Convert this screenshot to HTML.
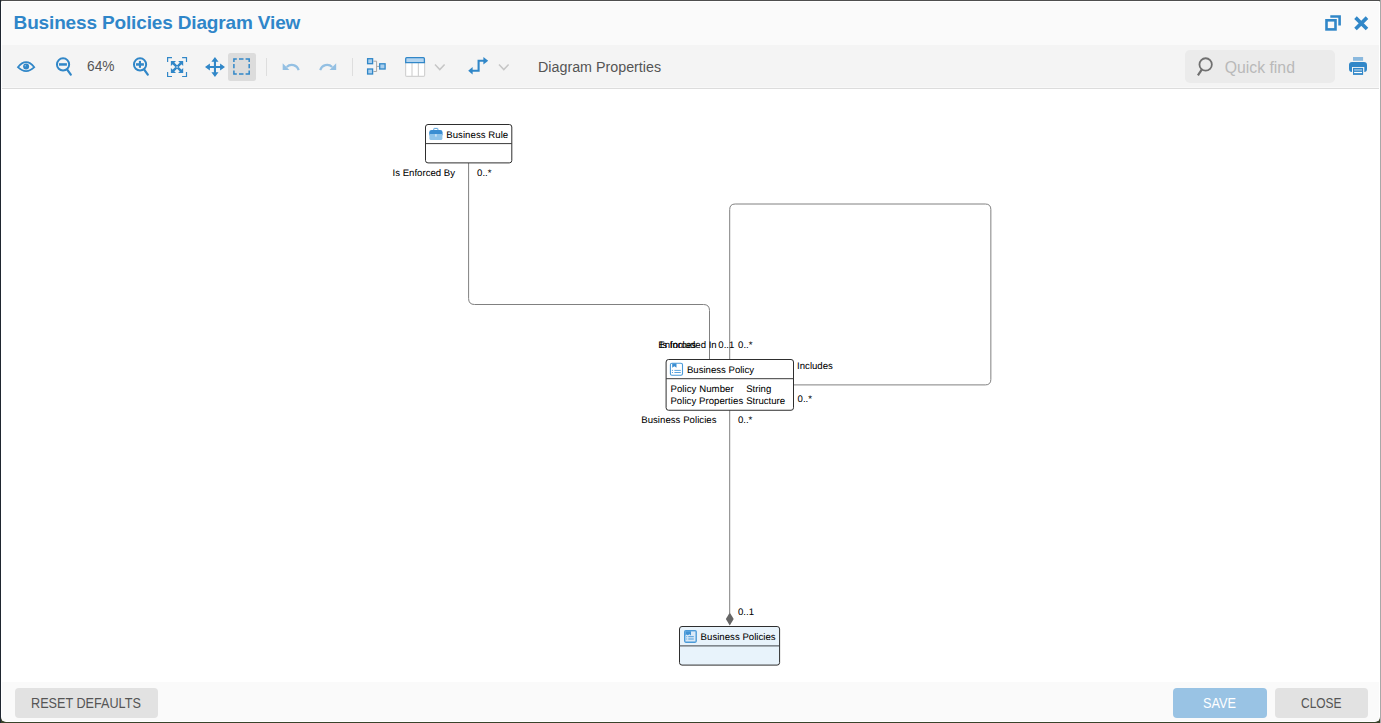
<!DOCTYPE html>
<html lang="en">
<head>
<meta charset="utf-8">
<title>Business Policies Diagram View</title>
<style>
html,body{margin:0;padding:0;}
body{width:1381px;height:723px;overflow:hidden;position:relative;background:#39432a;font-family:"Liberation Sans",sans-serif;}
#bgtop{position:absolute;left:0;top:0;width:1381px;height:1px;background:#4e4e4e;}
#bgleft{position:absolute;left:0;top:0;width:1px;height:723px;background:#1f2630;}
#bgright{position:absolute;left:1380px;top:0;width:1px;height:723px;background:#a8a8a8;}
#dlg{position:absolute;left:1px;top:1px;width:1379px;height:721px;background:#fff;border-radius:1px 1px 5px 5px;overflow:hidden;}
#titlebar{position:absolute;left:1px;top:1px;width:1377px;height:43px;background:#fafafa;}
#title{position:absolute;left:12.6px;top:10.6px;font-weight:bold;font-size:19px;letter-spacing:-0.15px;line-height:22px;color:#2f86c9;white-space:nowrap;}
#toolbar{position:absolute;left:1px;top:44px;width:1377px;height:42px;background:#f4f4f4;}
#tbline1{position:absolute;left:1px;top:86px;width:1377px;height:1px;background:#f8f8f8;}
#tbline2{position:absolute;left:1px;top:87px;width:1377px;height:1px;background:#dcdcdc;}
#canvas{position:absolute;left:0;top:88px;width:1379px;height:593px;background:#fff;}
#footer{position:absolute;left:1px;top:681px;width:1377px;height:39px;background:#fafafa;}
.ui{position:absolute;white-space:nowrap;transform-origin:0 0;color:#555;}
.btn{position:absolute;border-radius:4px;background:#e2e2e2;}
svg{position:absolute;left:0;top:0;overflow:visible;}
#diagram text{stroke:#000;stroke-width:0.04px;}
</style>
</head>
<body>
<div id="bgtop"></div><div id="bgleft"></div><div id="bgright"></div>
<div id="dlg">
  <div id="titlebar"></div>
  <div id="title">Business Policies Diagram View</div>
  <div id="toolbar"></div>
  <div id="tbline1"></div><div id="tbline2"></div>
  <div id="canvas"></div>
  <div id="footer"></div>

  <div class="ui" id="t64" style="left:86.4px;top:55.3px;font-size:15px;line-height:20px;transform:scaleX(0.915);">64%</div>
  <div class="ui" id="tdp" style="left:537.3px;top:56.3px;font-size:15.3px;line-height:20px;transform:scaleX(0.934);">Diagram Properties</div>
  <div class="btn" style="left:1184px;top:49px;width:150px;height:33px;background:#ebebeb;border-radius:5px;"></div>
  <div class="ui" id="tqf" style="left:1223.7px;top:56.5px;font-size:15.8px;line-height:20px;color:#b9b9b9;">Quick find</div>

  <div class="btn" style="left:227px;top:52px;width:28px;height:28px;background:#dcdcdc;border-radius:2.5px;"></div>
  <div style="position:absolute;left:265px;top:57px;width:1px;height:18px;background:#dedede;"></div>
  <div style="position:absolute;left:351px;top:57px;width:1px;height:18px;background:#dedede;"></div>

  <div class="btn" style="left:14px;top:687px;width:143px;height:30px;"></div>
  <div class="ui" id="trd" style="left:30.3px;top:691.6px;font-size:14.5px;line-height:20px;transform:scaleX(0.872);">RESET DEFAULTS</div>
  <div class="btn" style="left:1172px;top:687px;width:94px;height:30px;background:#99c3e4;"></div>
  <div class="ui" id="tsv" style="left:1201.7px;top:691.6px;font-size:14.5px;line-height:20px;color:#fff;transform:scaleX(0.877);">SAVE</div>
  <div class="btn" style="left:1274px;top:687px;width:93px;height:30px;"></div>
  <div class="ui" id="tcl" style="left:1299.8px;top:691.6px;font-size:14.5px;line-height:20px;transform:scaleX(0.824);">CLOSE</div>

  <svg id="icons" width="1379" height="90" viewBox="1 1 1379 90">
  <!-- eye -->
  <path d="M17.9,67.2 Q21.8,62.1 26.1,62.1 Q30.4,62.1 34.3,67.2 Q30.4,71.1 26.1,71.1 Q21.8,71.1 17.9,67.2 Z" fill="none" stroke="#3187c8" stroke-width="1.7" stroke-linejoin="miter"/>
  <circle cx="26.1" cy="66.5" r="3" fill="#3187c8"/>
  <circle cx="25.3" cy="65.8" r="0.8" fill="#8fbde2"/>
  <!-- zoom out -->
  <circle cx="63.05" cy="64.45" r="6.1" fill="none" stroke="#3187c8" stroke-width="2"/>
  <path d="M67.2,69.6 L70.8,74.7" stroke="#3187c8" stroke-width="2.2" stroke-linecap="round"/>
  <rect x="59" y="63.2" width="7.9" height="2.5" fill="#3187c8"/>
  <!-- zoom in -->
  <circle cx="140.05" cy="64.45" r="6.1" fill="none" stroke="#3187c8" stroke-width="2"/>
  <path d="M144.2,69.6 L147.8,74.7" stroke="#3187c8" stroke-width="2.2" stroke-linecap="round"/>
  <rect x="136" y="63.2" width="7.9" height="2.5" fill="#3187c8"/>
  <rect x="138.9" y="60.9" width="2.1" height="6.9" fill="#3187c8"/>
  <!-- fit -->
  <g fill="none" stroke="#3187c8" stroke-width="1.2">
    <path d="M172,57.6 H167.6 V62"/><path d="M182.1,57.6 H186.5 V62"/>
    <path d="M172,76.5 H167.6 V72.1"/><path d="M182.1,76.5 H186.5 V72.1"/>
  </g>
  <g fill="#3187c8" stroke="none">
    <path d="M170.9,60.9 H176 L170.9,66 Z"/><path d="M183.2,60.9 V66 L178.1,60.9 Z"/>
    <path d="M170.9,73.1 V68 L176,73.1 Z"/><path d="M183.2,73.1 H178.1 L183.2,68 Z"/>
  </g>
  <path d="M172.6,62.6 L181.5,71.4 M181.5,62.6 L172.6,71.4" stroke="#3187c8" stroke-width="2.4"/>
  <rect x="176.4" y="66.3" width="1.4" height="1.4" fill="#d9e8f5"/>
  <!-- move -->
  <path d="M214.95,56.9 L218.5,61.8 H216 V65.9 H220.1 V63.4 L225,66.95 L220.1,70.5 V68 H216 V72.2 H218.5 L214.95,77.1 L211.4,72.2 H213.9 V68 H209.9 V70.5 L205,66.95 L209.9,63.4 V65.9 H213.9 V61.8 H211.4 Z" fill="#3187c8"/>
  <!-- select (dashed rect) -->
  <g fill="none" stroke="#3187c8" stroke-width="1.5">
    <path d="M233.9,62 V58.9 H236.8"/><path d="M239,58.9 H243.5"/><path d="M245.6,58.9 H249.2 V62"/>
    <path d="M233.9,64 V68.2"/><path d="M249.2,64 V68.2"/>
    <path d="M233.9,70.4 V74.1 H236.8"/><path d="M239,74.1 H243.5"/><path d="M245.6,74.1 H249.2 V70.4"/>
  </g>
  <!-- undo -->
  <path d="M282.7,63.2 V69.9 H289.4 Z" fill="#94c0e3"/>
  <path d="M286.7,67 A7.2,7.2 0 0 1 298.7,70.1" fill="none" stroke="#94c0e3" stroke-width="2.1"/>
  <!-- redo -->
  <path d="M336.2,63.2 V69.9 H329.5 Z" fill="#94c0e3"/>
  <path d="M332.2,67 A7.2,7.2 0 0 0 320.2,70.1" fill="none" stroke="#94c0e3" stroke-width="2.1"/>
  <!-- layout -->
  <g fill="none" stroke="#a8a8a8" stroke-width="1">
    <path d="M373.5,61.2 H376.6 V71.5 H373.5"/><path d="M376.6,66.4 H379"/>
  </g>
  <g fill="#a9cfee" stroke="#3187c8" stroke-width="1.3">
    <rect x="367.6" y="58.7" width="5" height="5"/><rect x="367.6" y="69" width="5" height="5"/><rect x="379.7" y="63.8" width="5.4" height="5.2"/>
  </g>
  <!-- table -->
  <rect x="405.6" y="61" width="19" height="15.4" rx="1.2" fill="#fff" stroke="#d2d2d2" stroke-width="1.2"/>
  <path d="M412,62.5 V76 M418.4,62.5 V76" stroke="#d2d2d2" stroke-width="1.2"/>
  <path d="M405.7,62.7 V58.7 Q405.7,57.7 406.7,57.7 H423.4 Q424.4,57.7 424.4,58.7 V62.7 Z" fill="#b4d5f0" stroke="#3187c8" stroke-width="1.3"/>
  <!-- chevrons -->
  <path d="M435,64.6 L439.8,69.6 L444.6,64.6" fill="none" stroke="#c6c6c6" stroke-width="1.5"/>
  <path d="M499,64.6 L503.8,69.6 L508.6,64.6" fill="none" stroke="#c6c6c6" stroke-width="1.5"/>
  <!-- route -->
  <path d="M471.5,70.7 H478.6 V60.8 H484" fill="none" stroke="#3187c8" stroke-width="2.1"/>
  <path d="M468.2,70.7 L472.6,66.9 V74.5 Z" fill="#3187c8"/>
  <path d="M488.2,60.8 L483.4,57 V64.6 Z" fill="#3187c8"/>
  <!-- search -->
  <circle cx="1205.65" cy="64.45" r="6.2" fill="none" stroke="#707070" stroke-width="1.8"/>
  <path d="M1201.9,69.3 L1197.9,75.3" stroke="#707070" stroke-width="2.2"/>
  <!-- print -->
  <rect x="1353" y="57" width="10.1" height="3.8" fill="#8bb9de"/>
  <path d="M1349,65 Q1349,62 1352,62 H1364 Q1367,62 1367,65 V69 Q1367,72 1364.3,72 V67 H1352 V72 Q1349,72 1349,69 Z" fill="#3187c8"/>
  <rect x="1353" y="67.9" width="10.1" height="7" fill="#3187c8"/>
  <rect x="1354.1" y="69.3" width="7.9" height="1.3" fill="#a6cbea"/>
  <rect x="1354.1" y="71.9" width="7.9" height="1.2" fill="#fff"/>
  <!-- restore -->
  <rect x="1326.5" y="20.3" width="9" height="9.1" fill="none" stroke="#3187c8" stroke-width="2.6"/>
  <path d="M1330.3,16.5 H1339.6 V25.6" fill="none" stroke="#3187c8" stroke-width="2.6"/>
  <!-- close -->
  <path d="M1355.5,17.6 L1367,29 M1367,17.6 L1355.5,29" stroke="#3187c8" stroke-width="3.6"/>
</svg>

  <svg id="diagram" width="1379" height="721" viewBox="1 1 1379 721" font-family="Liberation Sans, sans-serif" font-size="9.6" fill="#000" text-rendering="geometricPrecision">
  <g fill="none" stroke="#808080" stroke-width="1">
    <path d="M468.6,163 V298.5 Q468.6,304.5 474.6,304.5 H703.5 Q709.5,304.5 709.5,310.5 V359.5"/>
    <path d="M729.7,359.5 V209.5 Q729.7,204 735.2,204 H985.35 Q990.85,204 990.85,209.5 V379.4 Q990.85,384.9 985.35,384.9 H794"/>
    <path d="M729.7,410 V613"/>
  </g>
  <path d="M729.77,612.5 L733.7,619 L729.77,625.5 L725.85,619 Z" fill="#666"/>
  <!-- Business Rule -->
  <rect x="425.5" y="124.5" width="86.3" height="38.4" rx="2.5" fill="#fff" stroke="#2e2e2e" stroke-width="1"/>
  <path d="M425.5,143.6 H511.8" stroke="#3a3a3a" stroke-width="1"/>
  <g>
    <path d="M433.8,130.2 V128.9 Q433.8,128.4 434.3,128.4 H437.4 Q437.9,128.4 437.9,128.9 V130.2" fill="none" stroke="#5ba3dc" stroke-width="1"/>
    <path d="M429.2,132.4 Q429.2,130 431.6,130 H440.2 Q442.6,130 442.6,132.4 V134.4 Q442.6,135.6 441.2,135.6 H430.6 Q429.2,135.6 429.2,134.4 Z" fill="#3a8ed2"/>
    <path d="M429.4,134 H442.4 V138.4 Q442.4,140 440.8,140 H431 Q429.4,140 429.4,138.4 Z" fill="#8ec4ea"/>
    <rect x="435.1" y="134.2" width="1.6" height="2.4" fill="#cfe4f5"/>
  </g>
  <text x="446.25" y="138" textLength="61.95">Business Rule</text>
  <text x="392.6" y="176">Is Enforced By</text>
  <text x="477.1" y="176">0..*</text>
  <!-- Business Policy -->
  <text x="658.3" y="348">Enforces</text>
  <text x="659.65" y="348">Is Included In</text>
  <text x="718.3" y="348">0..1</text>
  <text x="738.1" y="348">0..*</text>
  <rect x="666.1" y="359.5" width="127.4" height="50.75" rx="2.5" fill="#fff" stroke="#2e2e2e" stroke-width="1"/>
  <path d="M666.1,378.7 H793.5" stroke="#3a3a3a" stroke-width="1"/>
  <g>
    <rect x="670.4" y="363.2" width="12.1" height="12.1" rx="1.6" fill="#fff" stroke="#4a9ad9" stroke-width="1.1"/>
    <path d="M672.2,363.4 H676.5 V367.7 L674.35,366.2 L672.2,367.7 Z" fill="#3a8ed2"/>
    <path d="M674.4,370.4 H680.8 M674.4,372.5 H680.8" stroke="#4a9ad9" stroke-width="0.9"/>
    <path d="M671.9,370.4 H673 M671.9,372.5 H673" stroke="#4a9ad9" stroke-width="0.9"/>
  </g>
  <text x="686.9" y="373">Business Policy</text>
  <text x="670.4" y="392" textLength="63.3">Policy Number</text>
  <text x="746.2" y="392">String</text>
  <text x="670.4" y="404" textLength="72.8">Policy Properties</text>
  <text x="746.2" y="404">Structure</text>
  <text x="797.1" y="369">Includes</text>
  <text x="797.6" y="402">0..*</text>
  <text x="641.2" y="423" textLength="75.3">Business Policies</text>
  <text x="737.9" y="423">0..*</text>
  <!-- Business Policies -->
  <text x="738" y="615">0..1</text>
  <rect x="679.5" y="626.5" width="100.1" height="38.6" rx="2.5" fill="#e8f3fb" stroke="#2e2e2e" stroke-width="1"/>
  <path d="M679.5,645.9 H779.6" stroke="#3d4347" stroke-width="1"/>
  <g>
    <rect x="684" y="630" width="12.9" height="12.9" rx="1.8" fill="#4b9bd9"/>
    <rect x="685.4" y="631.4" width="10.1" height="10.1" fill="#d9e9f7"/>
    <path d="M685.4,631.2 H691 V635.4 L689.4,634.2 L687.9,635.2 L686.6,634.5 L685.4,635.6 Z" fill="#3f92d5"/>
    <path d="M688.3,636.7 H693.8 M688.3,639 H693.8" stroke="#4b9bd9" stroke-width="1"/>
    <path d="M686.2,636.7 H687.2 M686.2,639 H687.2" stroke="#4b9bd9" stroke-width="0.9"/>
  </g>
  <text x="700.6" y="640" textLength="75.05">Business Policies</text>
</svg>
</div>
</body>
</html>
